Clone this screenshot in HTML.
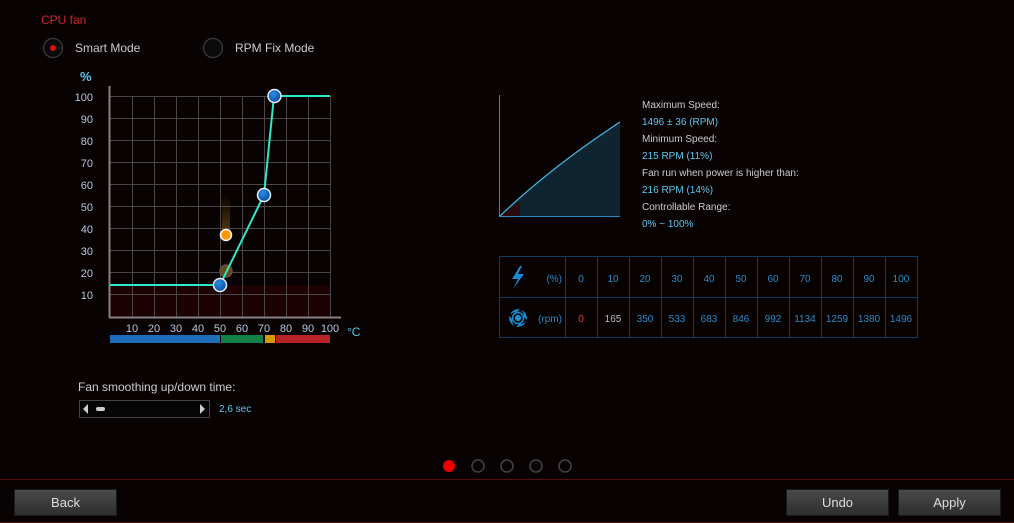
<!DOCTYPE html>
<html><head><meta charset="utf-8"><style>
html,body{margin:0;padding:0;background:#080203;width:1014px;height:523px;overflow:hidden;font-family:"Liberation Sans",Arial,sans-serif}
.btn{position:absolute;top:489px;height:27px;width:103px;background:linear-gradient(#4a4a4a,#2e2e2e);border:1px solid #1a1a1a;box-sizing:border-box;color:#ddd;font-size:13px;text-align:center;line-height:26px}
</style></head><body>
<svg width="1014" height="523" style="position:absolute;left:0;top:0" font-family="Liberation Sans, Arial, sans-serif">
<defs>
<radialGradient id="bl" cx="40%" cy="35%" r="65%"><stop offset="0" stop-color="#2a8ee0"/><stop offset="1" stop-color="#0650a8"/></radialGradient>
<linearGradient id="fd" x1="0" y1="0" x2="0" y2="1"><stop offset="0" stop-color="#6a4a10" stop-opacity="0"/><stop offset="1" stop-color="#6a4a10" stop-opacity="0.8"/></linearGradient>
</defs>
<text x="41" y="24" fill="#c8282a" font-size="12">CPU fan</text>
<circle cx="53" cy="48" r="9.5" fill="#0a0a0a" stroke="#3a3a3a" stroke-width="1.3"/>
<circle cx="53" cy="48" r="3" fill="#e01010"/>
<text x="75" y="52" fill="#ccc" font-size="12">Smart Mode</text>
<circle cx="213" cy="48" r="9.5" fill="#0a0a0a" stroke="#3a3a3a" stroke-width="1.3"/>
<text x="235" y="52" fill="#ccc" font-size="12">RPM Fix Mode</text>

<text x="80" y="81" fill="#5ec8f0" font-size="13" font-weight="bold">%</text>
<g fill="#b8c8e0" font-size="11" text-anchor="end">
<text x="93" y="101">100</text><text x="93" y="123">90</text><text x="93" y="145">80</text><text x="93" y="167">70</text><text x="93" y="189">60</text><text x="93" y="211">50</text><text x="93" y="233">40</text><text x="93" y="255">30</text><text x="93" y="277">20</text><text x="93" y="299">10</text>
</g>
<rect x="110" y="285" width="220" height="32" fill="#1c0203"/>
<g stroke="#4a4646" stroke-width="1">
<line x1="110" y1="96.5" x2="330" y2="96.5"/><line x1="110" y1="118.5" x2="330" y2="118.5"/><line x1="110" y1="140.5" x2="330" y2="140.5"/><line x1="110" y1="162.5" x2="330" y2="162.5"/><line x1="110" y1="184.5" x2="330" y2="184.5"/><line x1="110" y1="206.5" x2="330" y2="206.5"/><line x1="110" y1="228.5" x2="330" y2="228.5"/><line x1="110" y1="250.5" x2="330" y2="250.5"/><line x1="110" y1="272.5" x2="330" y2="272.5"/><line x1="110" y1="294.5" x2="330" y2="294.5"/>
<line x1="132.5" y1="96" x2="132.5" y2="317"/><line x1="154.5" y1="96" x2="154.5" y2="317"/><line x1="176.5" y1="96" x2="176.5" y2="317"/><line x1="198.5" y1="96" x2="198.5" y2="317"/><line x1="220.5" y1="96" x2="220.5" y2="317"/><line x1="242.5" y1="96" x2="242.5" y2="317"/><line x1="264.5" y1="96" x2="264.5" y2="317"/><line x1="286.5" y1="96" x2="286.5" y2="317"/><line x1="308.5" y1="96" x2="308.5" y2="317"/><line x1="330.5" y1="96" x2="330.5" y2="317"/>
</g>
<line x1="109.5" y1="86" x2="109.5" y2="318" stroke="#8a8080" stroke-width="2"/>
<line x1="109" y1="317.5" x2="341" y2="317.5" stroke="#8a8080" stroke-width="2"/>
<g fill="#b8c8e0" font-size="11" text-anchor="middle">
<text x="132" y="332">10</text><text x="154" y="332">20</text><text x="176" y="332">30</text><text x="198" y="332">40</text><text x="220" y="332">50</text><text x="242" y="332">60</text><text x="264" y="332">70</text><text x="286" y="332">80</text><text x="308" y="332">90</text><text x="330" y="332">100</text>
</g>
<text x="347" y="336" fill="#5ec8f0" font-size="12">°C</text>
<rect x="110" y="335" width="110" height="8" fill="#1f6cb8"/>
<rect x="221" y="335" width="42" height="8" fill="#138048"/>
<rect x="265" y="335" width="10" height="8" fill="#d49a00"/>
<rect x="276" y="335" width="54" height="8" fill="#b82426"/>
<rect x="222" y="195" width="8" height="40" fill="url(#fd)"/>
<circle cx="226" cy="271" r="6" fill="#6a4a10" stroke="#5a5050" stroke-width="1.5"/>
<polyline points="110,285 220,285 264,195 274,96 330,96" fill="none" stroke="#30e8c8" stroke-width="2"/>
<circle cx="226" cy="235" r="5.5" fill="#ff9800" stroke="#fff" stroke-width="1.5"/>
<circle cx="220" cy="285" r="6.5" fill="url(#bl)" stroke="#e8eef8" stroke-width="1.5"/>
<circle cx="264" cy="195" r="6.5" fill="url(#bl)" stroke="#e8eef8" stroke-width="1.5"/>
<circle cx="274.5" cy="96" r="6.5" fill="url(#bl)" stroke="#e8eef8" stroke-width="1.5"/>

<text x="78" y="391" fill="#ccc" font-size="12">Fan smoothing up/down time:</text>
<rect x="79.5" y="400.5" width="130" height="17" fill="#050505" stroke="#444"/>
<polygon points="88,404 88,414 83,409" fill="#ccc"/>
<rect x="96" y="407" width="9" height="4" rx="2" fill="#ccc"/>
<polygon points="200,404 200,414 205,409" fill="#ccc"/>
<text x="219" y="412" fill="#5ec8f0" font-size="10">2,6 sec</text>

<path d="M500,216 Q550,168 620,122 L620,216 Z" fill="#0f2431"/>
<path d="M500,216 L520,201 L520,216 Z" fill="#2a0a0c"/>
<path d="M500,216 Q550,168 620,122" fill="none" stroke="#4ab8e8" stroke-width="1.2"/>
<line x1="499.5" y1="95" x2="499.5" y2="216" stroke="#2a8ac0"/>
<line x1="499" y1="216.5" x2="620" y2="216.5" stroke="#2a8ac0"/>
<g font-size="10">
<text x="642" y="108" fill="#ccc">Maximum Speed:</text>
<text x="642" y="125" fill="#5ec8f0">1496 ± 36 (RPM)</text>
<text x="642" y="142" fill="#ccc">Minimum Speed:</text>
<text x="642" y="159" fill="#5ec8f0">215 RPM (11%)</text>
<text x="642" y="176" fill="#ccc">Fan run when power is higher than:</text>
<text x="642" y="193" fill="#5ec8f0">216 RPM (14%)</text>
<text x="642" y="210" fill="#ccc">Controllable Range:</text>
<text x="642" y="227" fill="#5ec8f0">0% ~ 100%</text>
</g>
<g stroke="#0e3d60" fill="none">
<rect x="499.5" y="256.5" width="418" height="81"/>
<line x1="499" y1="297.5" x2="918" y2="297.5"/>
<line x1="565.5" y1="256" x2="565.5" y2="338"/><line x1="597.5" y1="256" x2="597.5" y2="338"/><line x1="629.5" y1="256" x2="629.5" y2="338"/><line x1="661.5" y1="256" x2="661.5" y2="338"/><line x1="693.5" y1="256" x2="693.5" y2="338"/><line x1="725.5" y1="256" x2="725.5" y2="338"/><line x1="757.5" y1="256" x2="757.5" y2="338"/><line x1="789.5" y1="256" x2="789.5" y2="338"/><line x1="821.5" y1="256" x2="821.5" y2="338"/><line x1="853.5" y1="256" x2="853.5" y2="338"/><line x1="885.5" y1="256" x2="885.5" y2="338"/>
</g>
<path d="M520,266 L512,279 L518,279 L513,289 L524,274 L518,274 L522,266 Z" fill="#1c8ad0"/>
<g transform="translate(518,318)" fill="#1c8ad0">
<circle r="3.2"/><circle r="5.5" fill="none" stroke="#1c8ad0" stroke-width="1.6"/>
<path d="M-8,-3 Q-6,-9 2,-9 L-1,-6 Q-6,-6 -8,-3Z M3,-8 Q9,-6 9,2 L6,-1 Q6,-6 3,-8Z M8,3 Q6,9 -2,9 L1,6 Q6,6 8,3Z M-3,8 Q-9,6 -9,-2 L-6,1 Q-6,6 -3,8Z"/>
</g>
<text x="562" y="282" fill="#2a8ac8" font-size="10" text-anchor="end">(%)</text>
<text x="562" y="322" fill="#2a8ac8" font-size="10" text-anchor="end">(rpm)</text>
<g font-size="10" text-anchor="middle" fill="#2a8ac8">
<text x="581" y="282">0</text><text x="613" y="282">10</text><text x="645" y="282">20</text><text x="677" y="282">30</text><text x="709" y="282">40</text><text x="741" y="282">50</text><text x="773" y="282">60</text><text x="805" y="282">70</text><text x="837" y="282">80</text><text x="869" y="282">90</text><text x="901" y="282">100</text>
<text x="581" y="322" fill="#e04040">0</text><text x="613" y="322" fill="#bbb">165</text><text x="645" y="322">350</text><text x="677" y="322">533</text><text x="709" y="322">683</text><text x="741" y="322">846</text><text x="773" y="322">992</text><text x="805" y="322">1134</text><text x="837" y="322">1259</text><text x="869" y="322">1380</text><text x="901" y="322">1496</text>
</g>

<circle cx="449" cy="466" r="6" fill="#e00"/>
<g fill="none" stroke="#444" stroke-width="1.5"><circle cx="478" cy="466" r="6"/><circle cx="507" cy="466" r="6"/><circle cx="536" cy="466" r="6"/><circle cx="565" cy="466" r="6"/></g>
<line x1="0" y1="479.5" x2="1014" y2="479.5" stroke="#5a0c10"/>
<line x1="0" y1="522.5" x2="1014" y2="522.5" stroke="#5a0c10"/>
</svg>
<div class="btn" style="left:14px">Back</div>
<div class="btn" style="left:786px">Undo</div>
<div class="btn" style="left:898px">Apply</div>
</body></html>
